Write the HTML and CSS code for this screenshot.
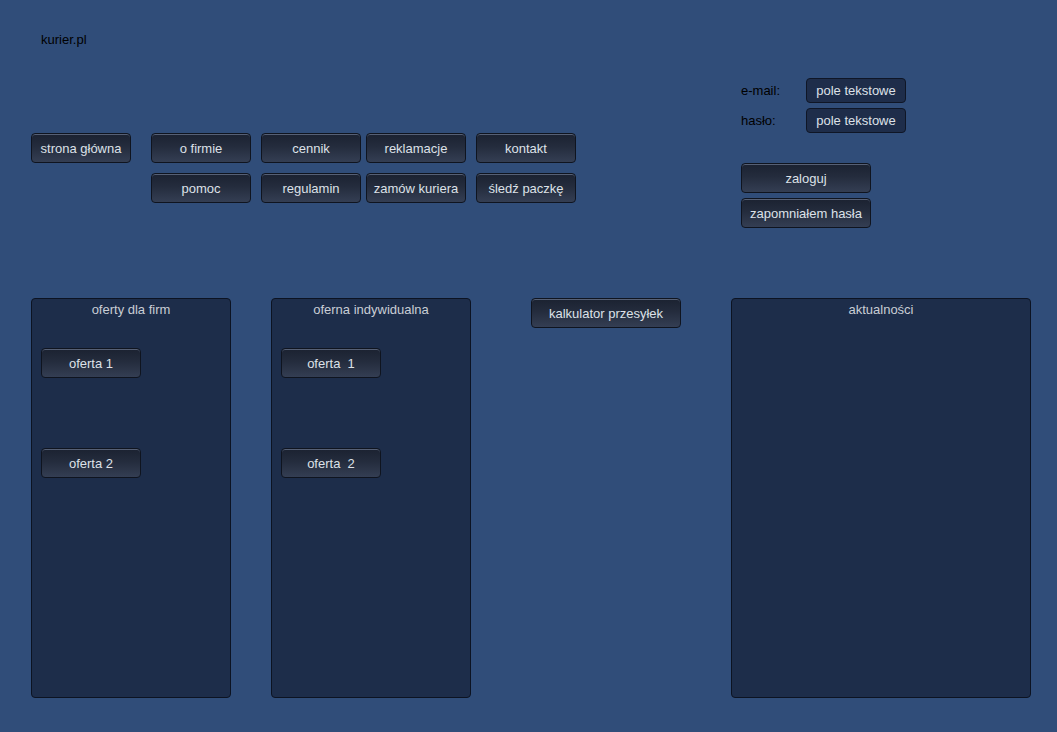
FILE: index.html
```html
<!DOCTYPE html>
<html lang="pl">
<head>
<meta charset="utf-8">
<title>kurier.pl</title>
<link rel="stylesheet" href="styles.css">
</head>
<body>
<div class="page">
  <div class="top">
    <div class="left">
      <div class="logo">kurier.pl</div>
      <nav class="nav">
        <div class="col"><button class="btn">strona główna</button></div>
        <div class="col gap20"><button class="btn">o firmie</button><button class="btn">pomoc</button></div>
        <div class="col gap10"><button class="btn">cennik</button><button class="btn">regulamin</button></div>
        <div class="col gap5"><button class="btn">reklamacje</button><button class="btn">zamów kuriera</button></div>
        <div class="col gap10"><button class="btn">kontakt</button><button class="btn">śledź paczkę</button></div>
      </nav>
    </div>
    <div class="login">
      <div class="field-row"><span class="label">e-mail:</span><span class="field">pole tekstowe</span></div>
      <div class="field-row"><span class="label">hasło:</span><span class="field">pole tekstowe</span></div>
      <div class="login-btns">
        <button class="btn wide">zaloguj</button>
        <button class="btn wide">zapomniałem hasła</button>
      </div>
    </div>
  </div>
  <div class="bottom">
    <section class="panel small">
      <div class="panel-title">oferty dla firm</div>
      <button class="btn offer">oferta 1</button>
      <button class="btn offer second">oferta 2</button>
    </section>
    <section class="panel small">
      <div class="panel-title">oferna indywidualna</div>
      <button class="btn offer">oferta&nbsp; 1</button>
      <button class="btn offer second">oferta&nbsp; 2</button>
    </section>
    <div class="calc"><button class="btn calc-btn">kalkulator przesyłek</button></div>
    <section class="panel news">
      <div class="panel-title">aktualności</div>
    </section>
  </div>
</div>
</body>
</html>
```

FILE: styles.css
```css
* { box-sizing: border-box; }
html, body {
  margin: 0;
  padding: 0;
  background: #304d79;
  width: 1057px;
  height: 732px;
  overflow: hidden;
  font-family: "Liberation Sans", Arial, sans-serif;
  font-size: 13px;
}
.page { width: 1057px; height: 732px; }
.top { display: flex; height: 298px; }
.left { width: 741px; }
.logo {
  padding: 32px 0 0 41px;
  line-height: 16px;
  height: 48px;
  color: #000;
}
.nav {
  display: flex;
  align-items: flex-start;
  padding-left: 31px;
  margin-top: 85px;
}
.col { display: flex; flex-direction: column; gap: 10px; }
.gap20 { margin-left: 20px; }
.gap10 { margin-left: 10px; }
.gap5 { margin-left: 5px; }

.btn {
  width: 100px;
  height: 30px;
  padding: 0;
  margin: 0;
  font-family: "Liberation Sans", Arial, sans-serif;
  font-size: 13px;
  color: #dde1e8;
  border: 1px solid #0f141f;
  border-radius: 4px;
  background: linear-gradient(to bottom, #1b2231 0%, #242c3d 45%, #343e53 100%);
  box-shadow: inset 0 1px 0 #566075;
  text-align: center;
  white-space: nowrap;
  cursor: pointer;
}

.login { display: flex; flex-direction: column; padding-top: 78px; }
.field-row { display: flex; align-items: center; height: 25px; margin-bottom: 5px; }
.label { width: 65px; color: #000; }
.field {
  width: 100px;
  height: 25px;
  line-height: 23px;
  text-align: center;
  color: #dde1e8;
  background: #1e2d4a;
  border: 1px solid #0f1626;
  border-radius: 4px;
}
.login-btns {
  display: flex;
  flex-direction: column;
  gap: 5px;
  margin-top: 25px;
}
.btn.wide { width: 130px; }

.bottom { display: flex; align-items: flex-start; padding-left: 31px; }
.panel {
  height: 400px;
  background: #1d2d4a;
  border: 1px solid #0c1322;
  border-radius: 4px;
  display: flex;
  flex-direction: column;
  align-items: flex-start;
}
.panel.small { width: 200px; margin-right: 40px; }
.panel.small:nth-child(2) { margin-right: 60px; }
.panel-title {
  align-self: stretch;
  text-align: center;
  color: #c9cdd5;
  line-height: 16px;
  padding-top: 3px;
}
.btn.offer { margin: 30px 0 0 9px; }
.btn.offer.second { margin-top: 70px; }
.calc { width: 200px; }
.btn.calc-btn { width: 150px; }
.panel.news { width: 300px; }
```
